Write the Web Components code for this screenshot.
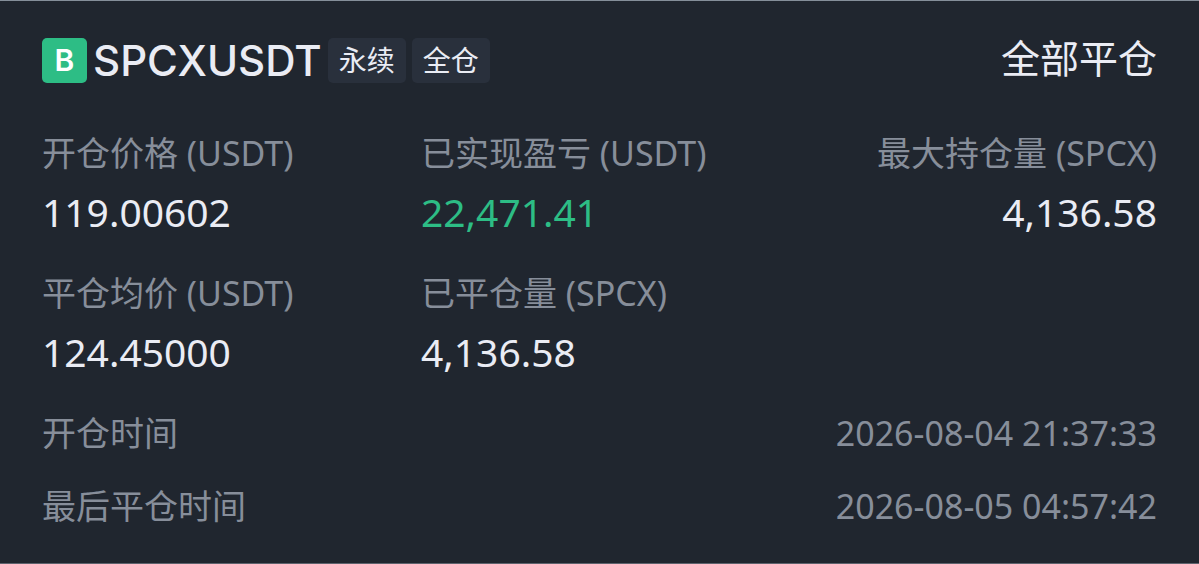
<!DOCTYPE html>
<html lang="zh-CN">
<head>
<meta charset="utf-8">
<meta name="viewport" content="width=device-width, initial-scale=1">
<title>SPCXUSDT</title>
<style>
  body {
    margin: 0;
    background: #20262f;
    color: #eaecf4;
    font-family: "Noto Sans", "Noto Sans CJK SC", sans-serif;
  }
</style>
</head>
<body>

<position-card symbol="SPCXUSDT" side="B" status="全部平仓">
  <position-tag slot="tags">永续</position-tag>
  <position-tag slot="tags">全仓</position-tag>

  <position-stat label="开仓价格 (USDT)">119.00602</position-stat>
  <position-stat label="已实现盈亏 (USDT)" tone="profit">22,471.41</position-stat>
  <position-stat label="最大持仓量 (SPCX)" align="end">4,136.58</position-stat>
  <position-stat label="平仓均价 (USDT)">124.45000</position-stat>
  <position-stat label="已平仓量 (SPCX)">4,136.58</position-stat>

  <position-time slot="times" label="开仓时间">2026-08-04 21:37:33</position-time>
  <position-time slot="times" label="最后平仓时间">2026-08-05 04:57:42</position-time>
</position-card>

<script>
// <position-card symbol="..." side="B" status="...">
//   slots: tags, times, and the default one for the stats grid
class PositionCard extends HTMLElement {
  constructor() {
    super();
    this.attachShadow({ mode: "open" });
  }

  connectedCallback() {
    this.shadowRoot.innerHTML = `
      <style>
        :host {
          display: block;
          padding: 37px 42px;
          border-top: 1px solid #858f9a;
          border-bottom: 1px solid #5d636d;
        }

        header {
          display: flex;
          align-items: flex-start;
          justify-content: space-between;
          margin-bottom: 50px;
        }

        .pair {
          display: flex;
          align-items: center;
          gap: 6px;
        }

        .side {
          width: 45px;
          border-radius: 5px;
          background: #2dbd85;
          color: #fff;
          font-family: Inter, sans-serif;
          font-size: 30px;
          font-weight: 600;
          line-height: 45px;
          text-align: center;
        }

        h1 {
          margin: 0;
          font-family: Inter, sans-serif;
          font-size: 42px;
          font-weight: 500;
          line-height: 44px;
        }

        .status {
          font-size: 39px;
          line-height: 40px;
        }

        .stats {
          display: grid;
          grid-template-columns: repeat(3, 1fr);
          gap: 39px 22px;
          margin-bottom: 39px;
        }

        .times {
          display: grid;
          gap: 33px;
        }
      </style>

      <header>
        <div class="pair">
          <span class="side">${this.getAttribute("side")}</span>
          <h1>${this.getAttribute("symbol")}</h1>
          <slot name="tags"></slot>
        </div>
        <span class="status">${this.getAttribute("status")}</span>
      </header>
      <div class="stats"><slot></slot></div>
      <div class="times"><slot name="times"></slot></div>
    `;
  }
}

class PositionTag extends HTMLElement {
  constructor() {
    super();
    this.attachShadow({ mode: "open" });
    this.shadowRoot.innerHTML = `
      <style>
        :host {
          display: block;
          padding: 0 11px;
          border-radius: 5px;
          background: #29303c;
          font-size: 28px;
          line-height: 45px;
        }
      </style>
      <slot></slot>
    `;
  }
}

// label on top, value under it
class PositionStat extends HTMLElement {
  constructor() {
    super();
    this.attachShadow({ mode: "open" });
  }

  connectedCallback() {
    this.shadowRoot.innerHTML = `
      <style>
        :host {
          display: grid;
          gap: 17px;
          white-space: nowrap;
        }

        :host([align="end"]) { text-align: right; }

        .label {
          color: #878e9a;
          font-size: 34px;
          line-height: 40px;
        }

        .value {
          font-size: 39px;
          line-height: 44px;
        }

        :host([tone="profit"]) .value { color: #2dbd85; }
      </style>
      <div class="label">${this.getAttribute("label")}</div>
      <div class="value"><slot></slot></div>
    `;
  }
}

class PositionTime extends HTMLElement {
  constructor() {
    super();
    this.attachShadow({ mode: "open" });
  }

  connectedCallback() {
    this.shadowRoot.innerHTML = `
      <style>
        :host {
          display: flex;
          justify-content: space-between;
          color: #878e9a;
          font-size: 34px;
          line-height: 40px;
        }
      </style>
      <span>${this.getAttribute("label")}</span>
      <time><slot></slot></time>
    `;
  }
}

customElements.define("position-card", PositionCard);
customElements.define("position-tag", PositionTag);
customElements.define("position-stat", PositionStat);
customElements.define("position-time", PositionTime);
</script>
</body>
</html>
